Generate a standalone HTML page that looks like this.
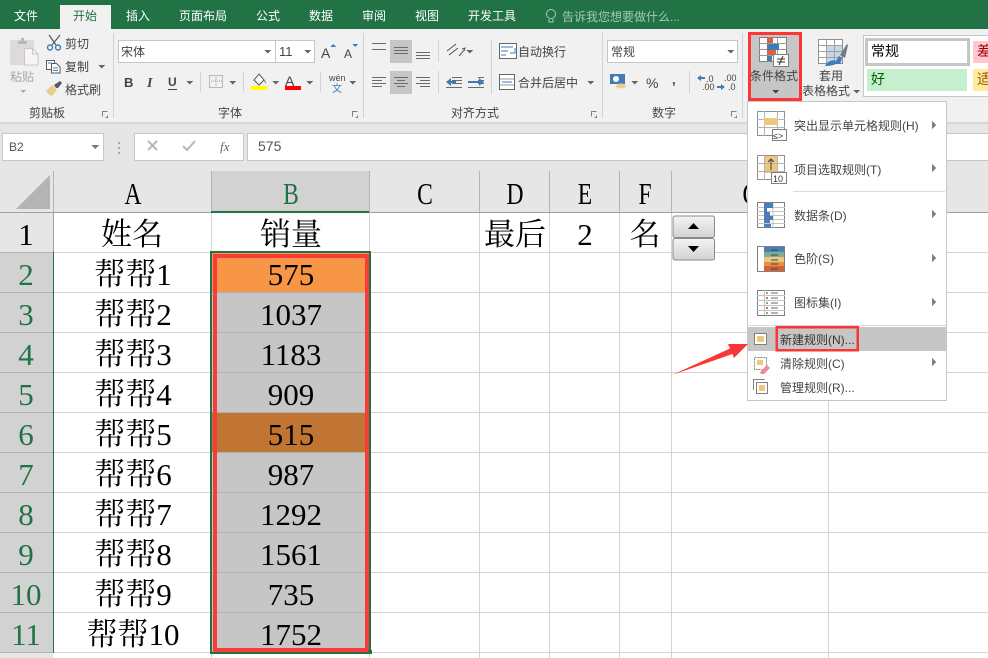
<!DOCTYPE html>
<html lang="zh"><head><meta charset="utf-8"><title>Excel</title>
<style>
html,body{margin:0;padding:0;background:#fff;overflow:hidden}
svg{display:block}
text{font-family:"Liberation Sans","Noto Sans CJK SC",sans-serif;font-size:12px;fill:#444}
.t{fill:#fff}
.s text,text.s{font-family:"Liberation Serif","Noto Serif CJK SC",serif;font-size:31px;fill:#000;text-anchor:middle}
.m{text-anchor:middle}
.g line{stroke:#d4d4d4;stroke-width:1}
.h line{stroke:#b4b4b4;stroke-width:1}
.l line{stroke:#6a6a6a;stroke-width:1}
.sep line{stroke:#d2d2d2;stroke-width:1}
</style></head><body>
<svg width="988" height="658" viewBox="0 0 988 658" xmlns="http://www.w3.org/2000/svg" shape-rendering="crispEdges">
<rect width="988" height="658" fill="#fff"/>
<!-- title/tab bar -->
<rect width="988" height="29" fill="#217346"/>
<rect x="60" y="5" width="51" height="24" fill="#f1f1f1"/>
<text class="t" x="14" y="20">文件</text>
<text x="73" y="20" style="fill:#217346">开始</text>
<text class="t" x="126" y="20">插入</text>
<text class="t" x="179" y="20">页面布局</text>
<text class="t" x="256" y="20">公式</text>
<text class="t" x="309" y="20">数据</text>
<text class="t" x="362" y="20">审阅</text>
<text class="t" x="415" y="20">视图</text>
<text class="t" x="468" y="20">开发工具</text>
<g fill="none" stroke="#a9cdb8" shape-rendering="auto"><circle cx="551" cy="14" r="4.500"/><path d="M549 19v3h4v-3"/></g>
<text x="562" y="21" style="fill:#a3c9b3">告诉我您想要做什么...</text>
<!-- ribbon -->
<rect y="29" width="988" height="93" fill="#f1f1f1"/>
<rect y="122" width="988" height="2" fill="#d6d6d6"/>
<rect y="124" width="988" height="47" fill="#e6e6e6"/>
<g class="sep"><line x1="113.500" y1="33" x2="113.500" y2="118"/><line x1="363.500" y1="33" x2="363.500" y2="118"/><line x1="602.500" y1="33" x2="602.500" y2="118"/><line x1="742.500" y1="33" x2="742.500" y2="118"/>
<line x1="200.500" y1="72" x2="200.500" y2="92"/><line x1="243.500" y1="72" x2="243.500" y2="92"/><line x1="320.500" y1="72" x2="320.500" y2="92"/>
<line x1="438.500" y1="40" x2="438.500" y2="62"/><line x1="438.500" y1="71" x2="438.500" y2="93"/><line x1="491.500" y1="40" x2="491.500" y2="94"/><line x1="689.500" y1="71" x2="689.500" y2="93"/></g>
<!-- clipboard -->
<g shape-rendering="auto">
<rect x="10" y="40" width="24" height="25" rx="1" fill="#dcdadb"/><path d="M18 44v-3h3v-3h3v3h3v3z" fill="#b9b7b8"/>
<path d="M24.500 48.500h8l5.500 5.500v11H24.500z" fill="#f6f4f7" stroke="#c9c7c9"/><path d="M32.500 48.500v5.500h5.500" fill="none" stroke="#c9c7c9"/>
<g fill="none" stroke="#5a5a5a" stroke-width="1.200"><path d="M49 35l7 10M60 35l-8 10"/></g>
<g fill="none" stroke="#3f7cb8" stroke-width="1.400"><circle cx="50" cy="47.500" r="2.500"/><circle cx="58" cy="47.500" r="2.500"/></g>
<rect x="46.500" y="60.500" width="8" height="9" fill="#fff" stroke="#5a5a5a"/>
<path d="M51.500 63.500h5l3.500 3.500v6h-8.500z" fill="#fff" stroke="#5a5a5a"/>
<path d="M48 63h4M53 68h5M53 70.500h5" stroke="#3f7cb8"/>
<path d="M46 91l6-6 5 5-5 6q-4-1-6-5z" fill="#eccb8e"/><path d="M54 85l6-4 2 2-4 5-2 0z" fill="#5a5a5a"/>
</g>
<text x="10" y="81" style="fill:#a8a8a8">粘贴</text>
<path d="M20 90h6l-3 3z" fill="#a8a8a8"/>
<text x="65" y="48">剪切</text><text x="65" y="71">复制</text><text x="65" y="94">格式刷</text>
<path d="M98 65h7l-3.500 3.500z" fill="#666"/>
<text x="29" y="117">剪贴板</text>
<!-- launcher -->
<g fill="none" stroke="#808080"><path d="M102.500 116.500v-5h5M105.500 117.500h2v-2"/><path d="M352.500 116.500v-5h5M355.500 117.500h2v-2"/><path d="M591.500 116.500v-5h5M594.500 117.500h2v-2"/><path d="M731.500 116.500v-5h5M734.500 117.500h2v-2"/></g>
<!-- font -->
<rect x="118.500" y="40.500" width="196" height="22" fill="#fff" stroke="#c6c6c6"/><line x1="275.500" y1="40" x2="275.500" y2="62" stroke="#c6c6c6"/>
<text x="121" y="56">宋体</text><text x="279" y="56" style="font-size:13px">11</text>
<path d="M264 50h7l-3.500 3.500zM304 50h7l-3.500 3.500z" fill="#666"/>
<text x="321" y="58" style="font-size:14px">A</text><path d="M330 47h6l-3-3z" fill="#3f7cb8"/>
<text x="344" y="58" style="font-size:12px">A</text><path d="M352 44h6l-3 3z" fill="#3f7cb8"/>
<text x="124" y="87" style="font-weight:700;font-size:13px">B</text>
<text x="147" y="87" style="font-style:italic;font-family:'Liberation Serif',serif;font-size:14px;font-weight:700">I</text>
<text x="168" y="86" style="font-size:12px;font-weight:700">U</text><line x1="168" y1="89.500" x2="177" y2="89.500" stroke="#444"/>
<path d="M186 81h7l-3.500 3.500zM229 81h7l-3.500 3.500zM272 81h7l-3.500 3.500zM306 81h7l-3.500 3.500zM349 81h7l-3.500 3.500z" fill="#666"/>
<rect x="209.500" y="75.500" width="13" height="12" fill="none" stroke="#808080" stroke-dasharray="1 1"/><path d="M216 75v12M209 81h13" stroke="#a0a0a0" stroke-dasharray="1 1"/>
<path d="M254 80l5-6 5 6-5 5z" fill="#fff" stroke="#555" shape-rendering="auto"/><path d="M263 79q3 1 3 5z" fill="#3f7cb8" shape-rendering="auto"/>
<rect x="251" y="86" width="16" height="4" fill="#ffff00"/>
<text x="285" y="86" style="font-size:14px;font-weight:400">A</text><rect x="285" y="86" width="16" height="4" fill="#ff0000"/>
<text x="329" y="81" style="font-size:9px">wén</text><text x="332" y="92" style="font-size:10px;fill:#3f7cb8">文</text>
<text x="218" y="117">字体</text>
<!-- alignment -->
<rect x="390" y="40" width="22" height="23" fill="#c6c6c6"/><rect x="390" y="71" width="22" height="23" fill="#c6c6c6"/>
<g class="l">
<line x1="372" y1="43.500" x2="386" y2="43.500"/><line x1="372" y1="49.500" x2="386" y2="49.500"/>
<line x1="394" y1="47.500" x2="408" y2="47.500"/><line x1="394" y1="50.500" x2="408" y2="50.500"/><line x1="394" y1="53.500" x2="408" y2="53.500"/>
<line x1="416" y1="52.500" x2="430" y2="52.500"/><line x1="416" y1="55.500" x2="430" y2="55.500"/><line x1="416" y1="58.500" x2="430" y2="58.500"/>
<line x1="372" y1="77.500" x2="386" y2="77.500"/><line x1="372" y1="80.500" x2="382" y2="80.500"/><line x1="372" y1="83.500" x2="386" y2="83.500"/><line x1="372" y1="86.500" x2="382" y2="86.500"/>
<line x1="394" y1="77.500" x2="408" y2="77.500"/><line x1="397" y1="80.500" x2="405" y2="80.500"/><line x1="394" y1="83.500" x2="408" y2="83.500"/><line x1="397" y1="86.500" x2="405" y2="86.500"/>
<line x1="416" y1="77.500" x2="430" y2="77.500"/><line x1="420" y1="80.500" x2="430" y2="80.500"/><line x1="416" y1="83.500" x2="430" y2="83.500"/><line x1="420" y1="86.500" x2="430" y2="86.500"/>
<line x1="452" y1="77.500" x2="462" y2="77.500"/><line x1="452" y1="80.500" x2="462" y2="80.500"/><line x1="452" y1="83.500" x2="462" y2="83.500"/><line x1="446" y1="87.500" x2="462" y2="87.500"/>
<line x1="478" y1="77.500" x2="484" y2="77.500"/><line x1="478" y1="80.500" x2="484" y2="80.500"/><line x1="478" y1="83.500" x2="484" y2="83.500"/><line x1="468" y1="87.500" x2="484" y2="87.500"/>
</g>
<path d="M446 82l5-4v3h5v2h-5v3zM484 82l-5-4v3h-11v2h11v3z" fill="#3f7cb8" shape-rendering="auto"/>
<g shape-rendering="auto" fill="none" stroke="#555"><path d="M447 51l9-7M449 55l9-7M459 56l6-7"/><path d="M464 51l1-3-3 1"/></g>
<path d="M466 50h7l-3.500 3.500zM587 81h7l-3.500 3.500z" fill="#666"/>
<rect x="499.500" y="43.500" width="17" height="15" fill="#fff" stroke="#666"/><path d="M501 47h12M501 51h7M501 55h5" stroke="#3f7cb8"/><path d="M515 48v5h-5" stroke="#3f7cb8" fill="none"/>
<text x="518" y="56">自动换行</text>
<rect x="499.500" y="74.500" width="15" height="15" fill="#fff" stroke="#666"/><path d="M500 79h14M500 85h14" stroke="#999"/><path d="M502 82h10" stroke="#3f7cb8"/>
<text x="518" y="87">合并后居中</text>
<text x="451" y="117">对齐方式</text>
<!-- number -->
<rect x="607.500" y="40.500" width="130" height="22" fill="#fff" stroke="#c6c6c6"/>
<text x="611" y="56">常规</text><path d="M727 50h7l-3.500 3.500z" fill="#666"/>
<rect x="610" y="74" width="15" height="10" fill="#3f7cb8"/><circle cx="616" cy="79" r="3" fill="#fff" shape-rendering="auto"/><ellipse cx="621" cy="86" rx="5" ry="2.500" fill="#eccb8e" shape-rendering="auto"/>
<path d="M631 81h7l-3.500 3.500z" fill="#666"/>
<text x="646" y="88" style="font-size:14px">%</text>
<text x="672" y="84" style="font-weight:700;font-size:13px">,</text>
<text x="706" y="82" style="font-size:9px">.0</text><text x="702" y="90" style="font-size:9px">.00</text><path d="M697 78l4-3v2h4v2h-4v2z" fill="#3f7cb8"/>
<text x="724" y="81" style="font-size:9px">.00</text><text x="728" y="90" style="font-size:9px">.0</text><path d="M725 87l-4-3v2h-4v2h4v2z" fill="#3f7cb8"/>
<text x="652" y="117">数字</text>
<!-- conditional format -->
<rect x="748" y="32" width="54" height="69" fill="#c6c6c6"/>
<rect x="749.500" y="33.500" width="51" height="66" fill="none" stroke="#fb3636" stroke-width="3"/>
<rect x="759.500" y="37.500" width="27" height="24" fill="#fff" stroke="#808080"/>
<path d="M768.500 37v25M777.500 37v25M759 43.500h28M759 49.500h28M759 55.500h28" stroke="#9a9a9a"/>
<rect x="767" y="38" width="6" height="5" fill="#dd5f3c"/><rect x="767" y="44" width="12" height="6" fill="#3f7cb8"/><rect x="767" y="50" width="9" height="5" fill="#dd5f3c"/><rect x="767" y="56" width="5" height="5" fill="#3f7cb8"/>
<rect x="773.500" y="54.500" width="15" height="12" fill="#fff" stroke="#808080"/>
<path d="M777 59h8M777 62h8M783 56l-4 9" stroke="#333" fill="none" shape-rendering="auto"/>
<text x="750" y="80">条件格式</text><path d="M772 90h7l-3.500 3.500z" fill="#444"/>
<!-- table format -->
<rect x="818.500" y="39.500" width="24" height="24" fill="#fff" stroke="#909090"/><rect x="827" y="46" width="15" height="17" fill="#c5d7ea"/>
<path d="M826.500 40v24M834.500 40v24M819 45.500h24M819 51.500h24M819 57.500h24" stroke="#a0a0a0"/>
<path d="M834 64l5-8 3 2-2 6z" fill="#3f7cb8" shape-rendering="auto"/><path d="M840 55l7-11 1 1-3 13z" fill="#777" shape-rendering="auto"/>
<path d="M825 66q2-5 9-6l4 3q-5 3-13 3z" fill="#3f7cb8" shape-rendering="auto"/>
<text x="819" y="80">套用</text><text x="802" y="95">表格格式</text><path d="M853 90h7l-3.500 3.500z" fill="#666"/>
<!-- style gallery -->
<rect x="863.500" y="35.500" width="130" height="61" fill="#fff" stroke="#c6c6c6"/>
<rect x="866.500" y="39.500" width="102" height="25" fill="#fff" stroke="#c6c6c6" stroke-width="3"/>
<text x="871" y="56" style="fill:#000;font-size:14px">常规</text>
<rect x="973" y="41" width="15" height="22" fill="#ffc7ce"/><text x="977" y="56" style="fill:#9c0006;font-size:14px">差</text>
<rect x="867" y="69" width="100" height="22" fill="#c6efce"/><text x="871" y="84" style="fill:#006100;font-size:14px">好</text>
<rect x="973" y="69" width="15" height="22" fill="#ffeb9c"/><text x="977" y="84" style="fill:#9c5700;font-size:14px">适</text>
<!-- formula bar -->
<rect x="2.500" y="133.500" width="101" height="27" fill="#fff" stroke="#c6c6c6"/>
<text x="9" y="151" style="fill:#555">B2</text><path d="M91 145h8l-4 4z" fill="#777"/>
<path d="M118 142h2v2h-2zM118 147h2v2h-2zM118 152h2v2h-2z" fill="#aaa"/>
<rect x="134.500" y="133.500" width="109" height="27" fill="#fff" stroke="#c6c6c6"/>
<path d="M148 141l9 9M157 141l-9 9" stroke="#b8b8b8" stroke-width="2" shape-rendering="auto"/>
<path d="M183 146l4 4 8-9" fill="none" stroke="#b8b8b8" stroke-width="2" shape-rendering="auto"/>
<text x="220" y="151" style="font-family:'Liberation Serif',serif;font-style:italic;font-size:13px;fill:#666">fx</text>
<rect x="247.500" y="133.500" width="745" height="27" fill="#fff" stroke="#c6c6c6"/>
<text x="258" y="151" style="fill:#555;font-size:14px">575</text>
<!-- sheet headers -->
<rect y="171" width="988" height="41" fill="#e6e6e6"/>
<path d="M16 209L50 175V209z" fill="#b4b4b4" shape-rendering="auto"/>
<rect x="211" y="171" width="158" height="41" fill="#d2d2d2"/>
<rect y="212" width="53" height="446" fill="#e6e6e6"/>
<rect y="252" width="53" height="400" fill="#d2d2d2"/>
<!-- gridlines -->
<g class="g">
<line x1="53" y1="252.500" x2="988" y2="252.500"/><line x1="53" y1="292.500" x2="988" y2="292.500"/><line x1="53" y1="332.500" x2="988" y2="332.500"/><line x1="53" y1="372.500" x2="988" y2="372.500"/><line x1="53" y1="412.500" x2="988" y2="412.500"/><line x1="53" y1="452.500" x2="988" y2="452.500"/><line x1="53" y1="492.500" x2="988" y2="492.500"/><line x1="53" y1="532.500" x2="988" y2="532.500"/><line x1="53" y1="572.500" x2="988" y2="572.500"/><line x1="53" y1="612.500" x2="988" y2="612.500"/><line x1="53" y1="652.500" x2="988" y2="652.500"/>
<line x1="211.500" y1="212" x2="211.500" y2="658"/><line x1="369.500" y1="212" x2="369.500" y2="658"/><line x1="479.500" y1="212" x2="479.500" y2="658"/><line x1="549.500" y1="212" x2="549.500" y2="658"/><line x1="619.500" y1="212" x2="619.500" y2="658"/><line x1="671.500" y1="212" x2="671.500" y2="658"/><line x1="828.500" y1="212" x2="828.500" y2="658"/>
</g>
<g class="h">
<line x1="53.500" y1="171" x2="53.500" y2="212"/><line x1="211.500" y1="171" x2="211.500" y2="212"/><line x1="369.500" y1="171" x2="369.500" y2="212"/><line x1="479.500" y1="171" x2="479.500" y2="212"/><line x1="549.500" y1="171" x2="549.500" y2="212"/><line x1="619.500" y1="171" x2="619.500" y2="212"/><line x1="671.500" y1="171" x2="671.500" y2="212"/><line x1="828.500" y1="171" x2="828.500" y2="212"/>
<line x1="0" y1="252.500" x2="53" y2="252.500"/><line x1="0" y1="292.500" x2="53" y2="292.500"/><line x1="0" y1="332.500" x2="53" y2="332.500"/><line x1="0" y1="372.500" x2="53" y2="372.500"/><line x1="0" y1="412.500" x2="53" y2="412.500"/><line x1="0" y1="452.500" x2="53" y2="452.500"/><line x1="0" y1="492.500" x2="53" y2="492.500"/><line x1="0" y1="532.500" x2="53" y2="532.500"/><line x1="0" y1="572.500" x2="53" y2="572.500"/><line x1="0" y1="612.500" x2="53" y2="612.500"/><line x1="0" y1="652.500" x2="53" y2="652.500"/>
</g>
<rect y="212" width="988" height="1" fill="#a0a0a0"/>
<rect x="53" y="212" width="1" height="40" fill="#a0a0a0"/>
<rect x="211" y="211" width="158" height="2" fill="#217346"/>
<rect x="53" y="252" width="1" height="401" fill="#217346"/>
<!-- selected cells -->
<rect x="212" y="253" width="157" height="399" fill="#c6c6c6"/>
<rect x="212" y="253" width="157" height="39" fill="#f79646"/>
<rect x="212" y="413" width="157" height="39" fill="#c07534"/>
<path d="M212 332.500h157M212 372.500h157M212 412.500h157M212 452.500h157M212 492.500h157M212 532.500h157M212 572.500h157M212 612.500h157M212 292.500h157" stroke="#afafaf"/>
<rect x="211" y="252" width="159" height="401" fill="none" stroke="#217346" stroke-width="2"/>
<rect x="215" y="256" width="152" height="394" fill="none" stroke="#fb3a3a" stroke-width="4"/>
<rect x="368" y="650" width="4" height="4" fill="#217346"/>
<!-- headers text -->
<g class="s">
<text transform="translate(133 204) scale(.76 1)">A</text>
<text transform="translate(291 204) scale(.76 1)" style="fill:#217346">B</text>
<text transform="translate(425 204) scale(.76 1)">C</text>
<text transform="translate(515 204) scale(.76 1)">D</text>
<text transform="translate(585 204) scale(.76 1)">E</text>
<text transform="translate(645 204) scale(.76 1)">F</text>
<text transform="translate(751 204) scale(.76 1)">G</text>
<text x="26" y="245">1</text>
<text x="26" y="285" style="fill:#217346">2</text><text x="26" y="325" style="fill:#217346">3</text><text x="26" y="365" style="fill:#217346">4</text><text x="26" y="405" style="fill:#217346">5</text><text x="26" y="445" style="fill:#217346">6</text><text x="26" y="485" style="fill:#217346">7</text><text x="26" y="525" style="fill:#217346">8</text><text x="26" y="565" style="fill:#217346">9</text><text x="26" y="605" style="fill:#217346">10</text><text x="26" y="645" style="fill:#217346">11</text>
<text x="132" y="245">姓名</text><text x="291" y="245">销量</text>
<text x="515" y="245">最后</text><text x="585" y="245">2</text><text x="645" y="245">名</text>
<text x="133" y="285">帮帮1</text><text x="133" y="325">帮帮2</text><text x="133" y="365">帮帮3</text><text x="133" y="405">帮帮4</text><text x="133" y="445">帮帮5</text><text x="133" y="485">帮帮6</text><text x="133" y="525">帮帮7</text><text x="133" y="565">帮帮8</text><text x="133" y="605">帮帮9</text><text x="133" y="645">帮帮10</text>
<text x="291" y="285">575</text><text x="291" y="325">1037</text><text x="291" y="365">1183</text><text x="291" y="405">909</text><text x="291" y="445">515</text><text x="291" y="485">987</text><text x="291" y="525">1292</text><text x="291" y="565">1561</text><text x="291" y="605">735</text><text x="291" y="645">1752</text>
</g>
<!-- spinner -->
<defs><linearGradient id="sp" x1="0" y1="0" x2="0" y2="1"><stop offset="0" stop-color="#f4f4f4"/><stop offset="1" stop-color="#d2d2d2"/></linearGradient></defs>
<rect x="673" y="216" width="41.500" height="21.500" rx="2" fill="url(#sp)" stroke="#8a8a8a" shape-rendering="auto"/>
<rect x="673" y="238.500" width="41.500" height="21.500" rx="2" fill="url(#sp)" stroke="#8a8a8a" shape-rendering="auto"/>
<path d="M688 229l5.500-6 5.500 6z" fill="#000" shape-rendering="auto"/><path d="M688 246h11l-5.500 6z" fill="#000" shape-rendering="auto"/>
<!-- dropdown menu -->
<rect x="747.500" y="101.500" width="199" height="299" fill="#fff" stroke="#c6c6c6"/>
<rect x="748" y="327" width="198" height="24" fill="#c6c6c6"/>
<path d="M793 191.500h152M748 325.500h198" stroke="#dcdcdc"/>
<rect x="776.500" y="327" width="81" height="23" fill="none" stroke="#fb3636" stroke-width="2.500"/>
<g fill="#808080"><path d="M932 121l4 4-4 4zM932 164l4 4-4 4zM932 210l4 4-4 4zM932 254l4 4-4 4zM932 298l4 4-4 4zM932 358l4 4-4 4z"/></g>
<text x="794" y="130">突出显示单元格规则(H)</text>
<text x="794" y="174">项目选取规则(T)</text>
<text x="794" y="220">数据条(D)</text>
<text x="794" y="263">色阶(S)</text>
<text x="794" y="307">图标集(I)</text>
<text x="780" y="344" style="fill:#333">新建规则(N)...</text>
<text x="780" y="368">清除规则(C)</text>
<text x="780" y="392">管理规则(R)...</text>
<!-- menu icons -->
<g fill="none" stroke="#909090">
<rect x="757.500" y="111.500" width="27" height="24" fill="#fff"/><path d="M757 119.500h28M757 127.500h28M764.500 111v25M777.500 111v25" stroke="#b4b4b4"/>
</g>
<rect x="764" y="118" width="14" height="7" fill="#edc87e"/>
<rect x="772.500" y="129.500" width="14" height="11" fill="#fff" stroke="#808080"/>
<text x="773" y="139" style="font-size:9px;fill:#333">≤&gt;</text>
<rect x="757.500" y="155.500" width="27" height="24" fill="#fff" stroke="#909090"/><rect x="764" y="156" width="14" height="17" fill="#edc87e"/>
<path d="M757 163.500h28M757 171.500h28M764.500 155v25M777.500 155v25" stroke="#b4b4b4"/>
<path d="M771 170v-11M768 162l3-3 3 3" stroke="#444" fill="none"/>
<rect x="771.500" y="172.500" width="15" height="11" fill="#fff" stroke="#808080"/>
<text x="773" y="182" style="font-size:9px;fill:#333">10</text>
<rect x="757.500" y="202.500" width="27" height="25" fill="#fff" stroke="#808080"/>
<path d="M773 203v25M757 207.500h28M757 211.500h28M757 215.500h28M757 219.500h28M757 223.500h28" stroke="#c4c4c4"/>
<rect x="764" y="203" width="9" height="5" fill="#4a7fb8"/><rect x="764" y="208" width="3" height="4" fill="#4a7fb8"/><rect x="764" y="212" width="6" height="4" fill="#4a7fb8"/><rect x="764" y="216" width="9" height="4" fill="#4a7fb8"/><rect x="764" y="220" width="6" height="3" fill="#4a7fb8"/><rect x="764" y="224" width="7" height="3" fill="#4a7fb8"/>
<rect x="757.500" y="246.500" width="27" height="25" fill="#fff" stroke="#808080"/>
<rect x="764" y="247" width="20" height="5" fill="#4a7fb8"/><rect x="764" y="252" width="20" height="5" fill="#7cae96"/><rect x="764" y="257" width="20" height="5" fill="#edc87e"/><rect x="764" y="262" width="20" height="4" fill="#e39142"/><rect x="764" y="266" width="20" height="5" fill="#d95f35"/>
<path d="M771 250h7M771 255h7M771 260h7M771 264h7M771 269h7" stroke="#444"/>
<rect x="757.500" y="290.500" width="27" height="25" fill="#fff" stroke="#808080"/>
<path d="M764.500 290v25M757 295.500h28M757 300.500h28M757 305.500h28M757 310.500h28" stroke="#c4c4c4"/>
<path d="M771 293h7M771 298h7M771 303h7M771 308h7M771 313h7" stroke="#666"/>
<rect x="766" y="292" width="2" height="2" fill="#7cae96"/><rect x="766" y="297" width="2" height="2" fill="#e0702f"/><rect x="766" y="302" width="2" height="2" fill="#7cae96"/><rect x="766" y="307" width="2" height="2" fill="#e0702f"/><rect x="766" y="312" width="2" height="2" fill="#7cae96"/>
<rect x="754.500" y="333.500" width="12" height="11" fill="#fff" stroke="#808080"/><rect x="757" y="336" width="7" height="6" fill="#edc87e"/>
<rect x="754.500" y="357.500" width="12" height="12" fill="#fff" stroke="#808080" stroke-dasharray="2 1"/><rect x="757" y="360" width="6" height="5" fill="#edc87e"/>
<path d="M760 372l7-7 3 3-6 6h-3z" fill="#ec8a9a" shape-rendering="auto"/>
<path d="M753.500 390v-10.500h11" fill="none" stroke="#808080"/>
<rect x="756.500" y="382.500" width="11" height="11" fill="#fff" stroke="#808080"/><rect x="759" y="385" width="6" height="6" fill="#edc87e"/>
<!-- arrow -->
<path d="M672 375L730 348.500 728 344H748L734 358 732.500 354z" fill="#fb3636" shape-rendering="auto"/>
</svg>
</body></html>
